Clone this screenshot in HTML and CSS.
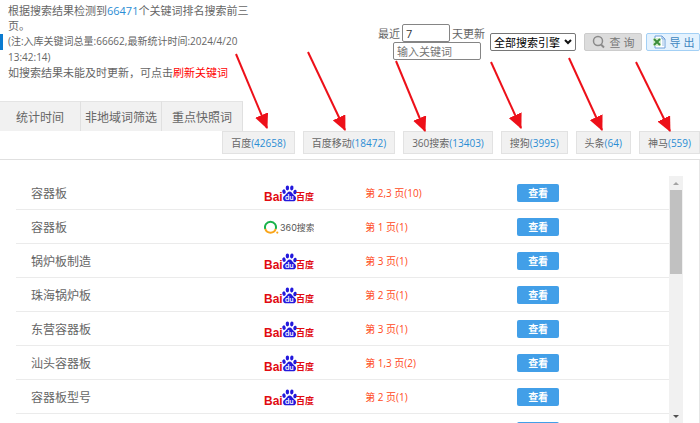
FILE: index.html
```
<!DOCTYPE html>
<html lang="zh-CN">

<head>
  <meta charset="UTF-8">
  <meta name="viewport" content="width=device-width, initial-scale=1.0">
  <title>关键词排名</title>
  <link rel="stylesheet" href="styles.css">
</head>

<body>

  <!-- logo -->
  <svg class="symbols" aria-hidden="true">
    <symbol id="logo-baidu" viewBox="0 0 50 18">
      <text class="logo-bai" x="0" y="17">Bai</text>
      <g fill="#2319dc">
        <ellipse cx="20" cy="7.6" rx="1.7" ry="2.3" transform="rotate(-15 20 7.6)" />
        <ellipse cx="23.4" cy="4" rx="1.7" ry="2.4" />
        <ellipse cx="27.8" cy="4" rx="1.7" ry="2.4" transform="rotate(8 27.8 4)" />
        <ellipse cx="31" cy="8" rx="1.7" ry="2.3" transform="rotate(15 31 8)" />
        <path d="M25.600 7.6c-1.9 0-2.4 1.8-3.8 3-1.400 1.200-2.900 2.200-2.700 4.200.2 2 1.700 2.700 3.500 2.500 2-.2 3.900-.2 5.900 0 1.900.2 3.300-.6 3.500-2.500.2-2-1.400-3-2.700-4.200-1.300-1.200-1.800-3-3.700-3z" />
      </g>
      <text class="logo-du" x="21" y="16">du</text>
      <text class="logo-cn" x="32" y="16">百度</text>
    </symbol>
    <symbol id="logo-360" viewBox="0 0 50 18">
      <g fill="none" stroke-width="2">
        <path stroke="#19b24b" d="M1.300 11A5.500 5.500 0 1 1 11.700 11" />
        <path stroke="#f9a51a" d="M1.300 11A5.500 5.500 0 0 0 11.700 11" />
      </g>
      <circle cx="13.300" cy="14.600" r="1.100" fill="#f9a51a" />
      <text class="logo-so" x="16" y="13">360搜索</text>
    </symbol>
  </svg>

  <header class="header">
    <div class="summary">
      <p>根据搜索结果检测到<span class="num">66471</span>个关键词排名搜索前三页。</p>
      <p class="note">(注:入库关键词总量:66662,最新统计时间:2024/4/20 13:42:14)</p>
      <p class="refresh">如搜索结果未能及时更新，可点击<a href="#">刷新关键词</a></p>
    </div>

    <form class="search">
      <div class="search-fields">
        <div class="days">
          <label for="days">最近</label>
          <input type="text" id="days" value="7">
          <span>天更新</span>
        </div>
        <input type="text" class="keyword" placeholder="输入关键词" aria-label="关键词">
      </div>
      <div class="engine">
        <select aria-label="搜索引擎">
          <option>全部搜索引擎</option>
          <option>百度</option>
          <option>百度移动</option>
          <option>360搜索</option>
          <option>搜狗</option>
          <option>头条</option>
          <option>神马</option>
        </select>
        <svg width="8" height="6" viewBox="0 0 8 6" aria-hidden="true">
          <path d="M1 1l3 3 3-3" fill="none" stroke="#111" stroke-width="2" />
        </svg>
      </div>
      <div class="search-btns">
        <button type="button" class="btn btn-query">
          <svg width="14" height="14" viewBox="0 0 14 14" aria-hidden="true">
            <circle cx="6" cy="6" r="4.500" fill="none" stroke="#8a8a8a" stroke-width="1.500" />
            <path d="M9 9.500l3 3" stroke="#8a8a8a" stroke-width="2" />
          </svg>
          查 询
        </button>
        <button type="button" class="btn btn-export">
          <svg width="14" height="14" viewBox="0 0 14 14" aria-hidden="true">
            <path d="M3 1h7l3 3v9H3z" fill="#fff" stroke="#6c9fd8" />
            <path d="M10 1v3h3" fill="none" stroke="#6c9fd8" />
            <path d="M10 6h2M10 8h2M10 10h2" stroke="#9abfe6" />
            <path d="M1 3h8v8H1z" fill="#d5ecd2" />
            <path d="M2 4l6 6M8 4l-6 6" stroke="#3a8d3a" stroke-width="2" />
          </svg>
          导 出
        </button>
      </div>
    </form>
  </header>

  <nav class="tabs">
    <button type="button">统计时间</button>
    <button type="button">非地域词筛选</button>
    <button type="button">重点快照词</button>
  </nav>

  <div class="engines">
    <button type="button">百度<span class="num">(42658)</span></button>
    <button type="button">百度移动<span class="num">(18472)</span></button>
    <button type="button">360搜索<span class="num">(13403)</span></button>
    <button type="button">搜狗<span class="num">(3995)</span></button>
    <button type="button">头条<span class="num">(64)</span></button>
    <button type="button">神马<span class="num">(559)</span></button>
  </div>

  <main class="panel">
    <div class="list">
      <table>
        <tbody>
          <tr>
            <td class="word">容器板</td>
            <td class="logo"><svg role="img" aria-label="百度"><use href="#logo-baidu" /></svg></td>
            <td class="page">第 2,3 页(10)</td>
            <td><button type="button" class="btn-view">查看</button></td>
          </tr>
          <tr>
            <td class="word">容器板</td>
            <td class="logo"><svg role="img" aria-label="360搜索"><use href="#logo-360" /></svg></td>
            <td class="page">第 1 页(1)</td>
            <td><button type="button" class="btn-view">查看</button></td>
          </tr>
          <tr>
            <td class="word">锅炉板制造</td>
            <td class="logo"><svg role="img" aria-label="百度"><use href="#logo-baidu" /></svg></td>
            <td class="page">第 3 页(1)</td>
            <td><button type="button" class="btn-view">查看</button></td>
          </tr>
          <tr>
            <td class="word">珠海锅炉板</td>
            <td class="logo"><svg role="img" aria-label="百度"><use href="#logo-baidu" /></svg></td>
            <td class="page">第 2 页(1)</td>
            <td><button type="button" class="btn-view">查看</button></td>
          </tr>
          <tr>
            <td class="word">东营容器板</td>
            <td class="logo"><svg role="img" aria-label="百度"><use href="#logo-baidu" /></svg></td>
            <td class="page">第 3 页(1)</td>
            <td><button type="button" class="btn-view">查看</button></td>
          </tr>
          <tr>
            <td class="word">汕头容器板</td>
            <td class="logo"><svg role="img" aria-label="百度"><use href="#logo-baidu" /></svg></td>
            <td class="page">第 1,3 页(2)</td>
            <td><button type="button" class="btn-view">查看</button></td>
          </tr>
          <tr>
            <td class="word">容器板型号</td>
            <td class="logo"><svg role="img" aria-label="百度"><use href="#logo-baidu" /></svg></td>
            <td class="page">第 2 页(1)</td>
            <td><button type="button" class="btn-view">查看</button></td>
          </tr>
          <tr>
            <td class="word"></td>
            <td class="logo"><svg role="img" aria-label="百度"><use href="#logo-baidu" /></svg></td>
            <td class="page"></td>
            <td><button type="button" class="btn-view" aria-label="查看"></button></td>
          </tr>
        </tbody>
      </table>
    </div>
    <div class="scrollbar">
      <button type="button" class="arrow-up" aria-label="向上滚动"></button>
      <div class="thumb"></div>
      <button type="button" class="arrow-down" aria-label="向下滚动"></button>
    </div>
  </main>

  <!-- 红色箭头标注 -->
  <svg class="marks" width="700" height="160" viewBox="0 0 700 160" aria-hidden="true">
    <defs>
      <marker id="head" markerUnits="userSpaceOnUse" markerWidth="15" markerHeight="14" refX="14" refY="7" orient="auto">
        <path d="M0 0l15 7-15 7z" fill="#ed1019" />
      </marker>
    </defs>
    <g class="lines">
      <path d="M236 54L267 128" />
      <path d="M308 52L345 130" />
      <path d="M396 61L425 131" />
      <path d="M491 62L521 128" />
      <path d="M569 58L602 130" />
      <path d="M636 62L670 131" />
    </g>
  </svg>

</body>

</html>
```

FILE: styles.css
```
* {
  box-sizing: border-box;
}

body {
  display: flex;
  flex-direction: column;
  position: relative;
  height: 100vh;
  margin: 0;
  overflow: hidden;
  background: #fff;
  color: #666;
  font-family: "Open Sans", "Noto Sans CJK SC", sans-serif;
  font-size: 11px;
}

p {
  margin: 0;
}

button,
input,
select {
  margin: 0;
  font-family: inherit;
}

button {
  padding: 0;
  border: none;
  cursor: pointer;
}

.symbols {
  display: none;
}

.num {
  color: #2a8dd4;
}

/* 顶部 */
.header {
  display: flex;
  justify-content: space-between;
  align-items: flex-start;
  padding-bottom: 20px;
}

.summary {
  width: 256px;
  padding: 3px 0 0 8px;
  line-height: 15px;
  background: linear-gradient(#0b7bd0, #0b7bd0) 0 34px / 3px 16px no-repeat;
}

.summary .note {
  font-size: 10px;
  line-height: 16px;
}

.summary .refresh {
  line-height: 16px;
}

.summary a {
  color: #f00;
  text-decoration: none;
}

/* 搜索表单 */
.search {
  display: flex;
  align-items: center;
  padding-top: 24px;
}

.search-fields {
  display: flex;
  flex-direction: column;
  align-items: flex-end;
  margin-right: 5px;
}

.days {
  display: flex;
  align-items: center;
  gap: 2px;
}

.search input {
  height: 18px;
  padding: 0 3px;
  border: 1px solid #858585;
  border-radius: 2px;
  background: #fff;
  color: #333;
  font-size: 11px;
}

.days input {
  width: 48px;
}

.search .keyword {
  width: 88px;
  margin-right: 4px;
}

.keyword::placeholder {
  color: #757575;
}

.engine {
  position: relative;
  margin-right: 8px;
}

.engine select {
  display: block;
  width: 86px;
  height: 18px;
  padding: 0 3px;
  border: 1px solid #767676;
  border-radius: 2px;
  background: #fff;
  color: #000;
  font-size: 11px;
  appearance: none;
}

.engine svg {
  position: absolute;
  top: 6px;
  right: 4px;
  pointer-events: none;
}

.search-btns {
  display: flex;
  gap: 4px;
}

.btn {
  display: flex;
  justify-content: center;
  align-items: center;
  gap: 4px;
  height: 18px;
  border-radius: 2px;
  font-size: 11px;
  white-space: nowrap;
}

.btn-query {
  width: 58px;
  border: 1px solid #ccc;
  background: #dcdcdc;
  color: #777;
}

.btn-export {
  width: 54px;
  border: 1px solid #a3d0f5;
  background: #e4f2fe;
  color: #3f87c0;
}

/* 标签 */
.tabs {
  display: flex;
}

.tabs button {
  width: 81px;
  height: 30px;
  border-top: 1px solid #e4e4e4;
  border-right: 1px solid #e0e0e0;
  background: #f1f1f1;
  color: #666;
  font-size: 12px;
}

.engines {
  display: flex;
  justify-content: flex-end;
  gap: 8px;
  padding-bottom: 5px;
  border-bottom: 1px solid #e0e0e0;
}

.engines button {
  height: 23px;
  padding: 0 8px;
  border: 1px solid #e2e2e2;
  background: #f1f1f1;
  color: #666;
  font-size: 10px;
}

/* 列表 */
.panel {
  display: flex;
  flex: 1;
  min-height: 0;
  padding: 16px 16px 0;
  border-right: 1px solid #e6e6e6;
}

.list {
  flex: 1;
  overflow: hidden;
}

.list table {
  width: 100%;
  border-spacing: 0;
  table-layout: fixed;
}

.list td {
  height: 34px;
  padding: 0;
  border-bottom: 1px solid #ebebeb;
}

.list .word {
  width: 38%;
  padding-left: 15px;
  font-size: 12px;
}

.list .logo {
  width: 101px;
}

.list .page {
  width: 152px;
  color: #ff4a22;
  font-size: 10px;
}

.logo svg {
  display: block;
  width: 50px;
  height: 18px;
}

.logo-bai {
  fill: #e10b12;
  font: bold 12px "Liberation Sans", sans-serif;
}

.logo-du {
  fill: #fff;
  font: 600 7px Inter, sans-serif;
}

.logo-cn {
  fill: #e10b12;
  font: bold 9px "Noto Sans CJK SC", sans-serif;
}

.logo-so {
  fill: #555;
  font: 9px Inter, "Noto Sans CJK SC", sans-serif;
}

.btn-view {
  display: block;
  width: 42px;
  height: 18px;
  border-radius: 2px;
  background: #429fe8;
  color: #fff;
  font-size: 10px;
  font-weight: bold;
}

/* 滚动条 */
.scrollbar {
  display: flex;
  flex-direction: column;
  width: 14px;
  background: #f1f1f1;
}

.thumb {
  height: 84px;
  margin: 0 1px;
  background: #c1c1c1;
}

.arrow-up,
.arrow-down {
  display: flex;
  justify-content: center;
  align-items: center;
  height: 14px;
  background: none;
}

.arrow-down {
  margin-top: auto;
}

.arrow-up::after,
.arrow-down::after {
  content: "";
  border-left: 3px solid transparent;
  border-right: 3px solid transparent;
}

.arrow-up::after {
  border-bottom: 3px solid #a3a3a3;
}

.arrow-down::after {
  border-top: 3px solid #505050;
}

/* 标注箭头 */
.marks {
  position: absolute;
  top: 0;
  right: 0;
  pointer-events: none;
}

.lines path {
  stroke: #ed1019;
  stroke-width: 2px;
  marker-end: url(#head);
}
```
